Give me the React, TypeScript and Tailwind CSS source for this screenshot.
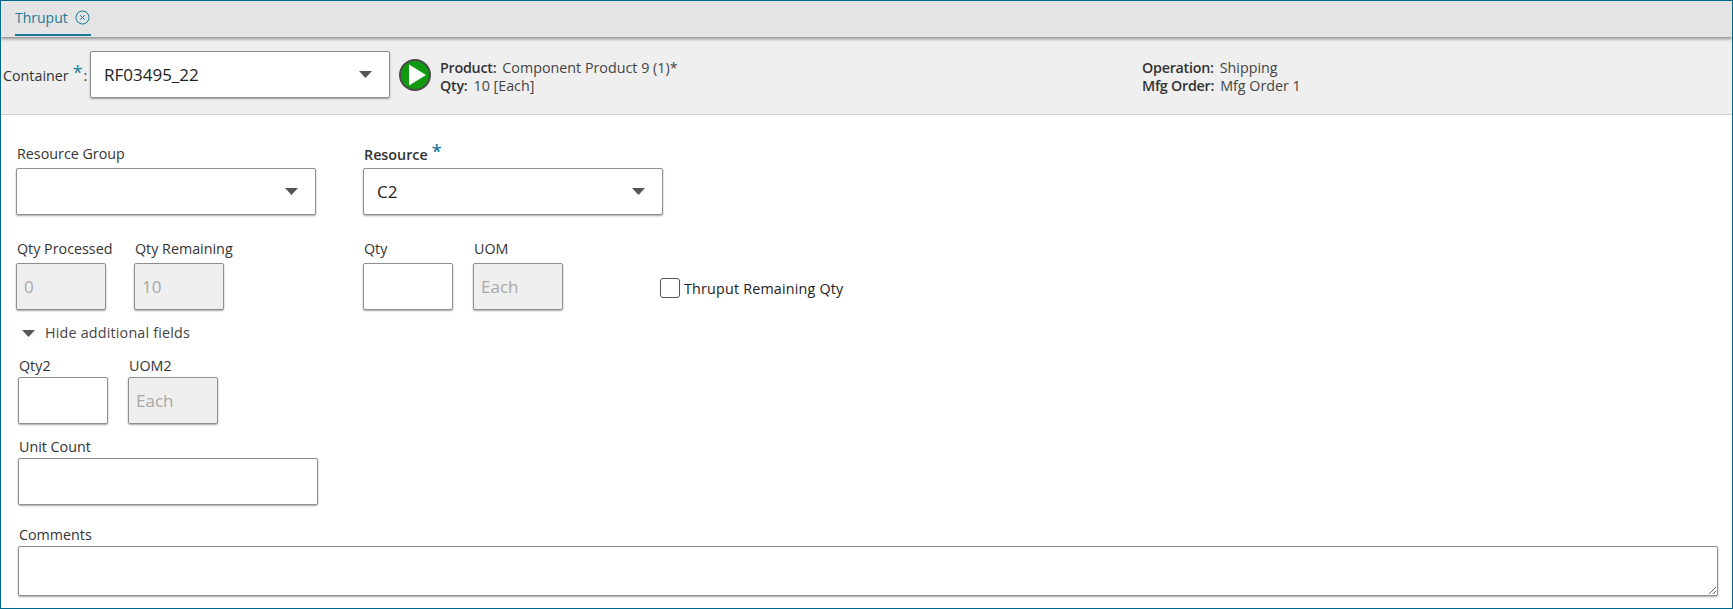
const boxCls = 'border border-[#8f8f8f] rounded-[2px] shadow-[0_1px_2px_rgba(0,0,0,0.35)] h-[47px]'

function Caret({ className = '' }: { className?: string }) {
  return (
    <svg width="13" height="7" viewBox="0 0 13 7" className={className}>
      <path d="M0 0h13L6.5 7z" fill="#555" />
    </svg>
  )
}

function Req() {
  return <span className="text-[#1a7a9a] text-[18px] leading-none relative top-[-2px] ml-[4px]">*</span>
}

function Label({ children, className = '' }: { children: React.ReactNode; className?: string }) {
  return <div className={`h-5 leading-5 text-[14.3px] whitespace-nowrap text-[#333] ${className}`}>{children}</div>
}

function Select({ value, className = '' }: { value?: string; className?: string }) {
  return (
    <div className={`${boxCls} bg-white flex items-center justify-between pl-[13px] pr-[17px] text-[17px] text-[#222] ${className}`}>
      <span>{value}</span>
      <Caret />
    </div>
  )
}

function SmallBox({ label, value, disabled, gap = 'mb-1', className = '' }: { label: string; value?: string; disabled?: boolean; gap?: string; className?: string }) {
  return (
    <div className={`w-[90px] ${className}`}>
      <Label className={`${gap} pl-[1px]`}>{label}</Label>
      <input
        readOnly
        disabled={disabled}
        defaultValue={value}
        className={`${boxCls} w-full px-[7px] text-[17px] outline-none ${disabled ? 'bg-[#efefef] text-[#a8a8a8]' : 'bg-white text-[#222]'}`}
      />
    </div>
  )
}

function Info({ name, value }: { name: string; value: string }) {
  return (
    <div className="h-[18px] leading-[18px] text-[14.3px] whitespace-nowrap">
      <span className="font-semibold tracking-[-0.25px] text-[#333] mr-[6px]">{name}:</span>
      <span className="text-[#444]">{value}</span>
    </div>
  )
}

export default function App() {
  return (
    <div className="w-[1733px] h-[609px] border border-[#00688b] bg-white overflow-hidden font-['Open_Sans','Noto_Sans',sans-serif]">
      {/* tab strip */}
      <div className="h-[36px] bg-[#e4e4e4] pl-[14px] shadow-[0_2px_3px_rgba(0,0,0,0.4)] relative">
        <div className="w-[76px] h-[35px] border-b-2 border-[#1a7a9a] flex items-center text-[14px] text-[#1a7a9a]">
          <span>Thruput</span>
          <svg width="15" height="15" viewBox="0 0 15 15" className="ml-[7px]" fill="none" stroke="#1a7a9a">
            <circle cx="7.5" cy="7.5" r="6.5" />
            <path d="M5.2 5.2l4.6 4.6M9.8 5.2l-4.6 4.6" />
          </svg>
        </div>
      </div>

      {/* container header */}
      <div className="h-[78px] pt-[4px] pb-[6px] bg-[#efefef] border-b border-[#cfcfcf] flex items-center pl-[2px]">
        <span className="w-[87px] shrink-0 pt-[2px] text-[14.3px] text-[#333] whitespace-nowrap">Container<Req /><span className="ml-[1px]">:</span></span>
        <Select value="RF03495_22" className="w-[300px] shrink-0" />
        <svg width="32" height="32" viewBox="0 0 32 32" className="ml-[9px] shrink-0">
          <circle cx="16" cy="16" r="15" fill="#0f9a0f" stroke="#4a4a4a" strokeWidth="2" />
          <path d="M10 5.5L27 16 10 26.5z" fill="#fff" />
        </svg>
        <div className="ml-[9px] mt-[4px] w-[702px] shrink-0">
          <Info name="Product" value="Component Product 9 (1)*" />
          <Info name="Qty" value="10 [Each]" />
        </div>
        <div className="mt-[4px]">
          <Info name="Operation" value="Shipping" />
          <Info name="Mfg Order" value="Mfg Order 1" />
        </div>
      </div>

      {/* form */}
      <div className="pl-[15px] pr-[14px]">
        <div className="flex mt-[29px]">
          <div className="w-[300px] mr-[47px]">
            <Label className="mb-1 pl-[1px]">Resource Group</Label>
            <Select />
          </div>
          <div className="w-[300px]">
            <Label className="mb-1 pl-[1px] font-semibold">Resource<Req /></Label>
            <Select value="C2" />
          </div>
        </div>

        <div className="flex items-end mt-[24px]">
          <SmallBox label="Qty Processed" value="0" disabled />
          <SmallBox label="Qty Remaining" value="10" disabled className="ml-[28px]" />
          <SmallBox label="Qty" className="ml-[139px]" />
          <SmallBox label="UOM" value="Each" disabled className="ml-[20px]" />
          <label className="flex items-center ml-[97px] mb-[11px] text-[14.3px] text-[#222] font-medium tracking-[0.2px] whitespace-nowrap">
            <input type="checkbox" className="appearance-none w-[20px] h-[20px] border border-[#555] rounded-[3px] bg-white mr-[4px]" />
            Thruput Remaining Qty
          </label>
        </div>

        <div className="flex items-center h-5 mt-[13px] pl-[6px] text-[14.3px] text-[#444] font-medium tracking-[0.2px]">
          <Caret />
          <span className="ml-[10px]">Hide additional fields</span>
        </div>

        <div className="pl-[2px]">
          <div className="flex mt-[13px]">
            <SmallBox label="Qty2" gap="mb-[1px]" />
            <SmallBox label="UOM2" value="Each" disabled gap="mb-[1px]" className="ml-[20px]" />
          </div>
          <div className="mt-[13px] w-[300px]">
            <Label className="mb-[1px] pl-[1px]">Unit Count</Label>
            <input className={`${boxCls} w-full bg-white outline-none`} />
          </div>
          <div className="mt-[20px]">
            <Label className="mb-[1px] pl-[1px]">Comments</Label>
            <textarea className="block w-full h-[50px] bg-white border border-[#8f8f8f] rounded-[2px] shadow-[0_1px_2px_rgba(0,0,0,0.35)] outline-none" />
          </div>
        </div>
      </div>
    </div>
  )
}
